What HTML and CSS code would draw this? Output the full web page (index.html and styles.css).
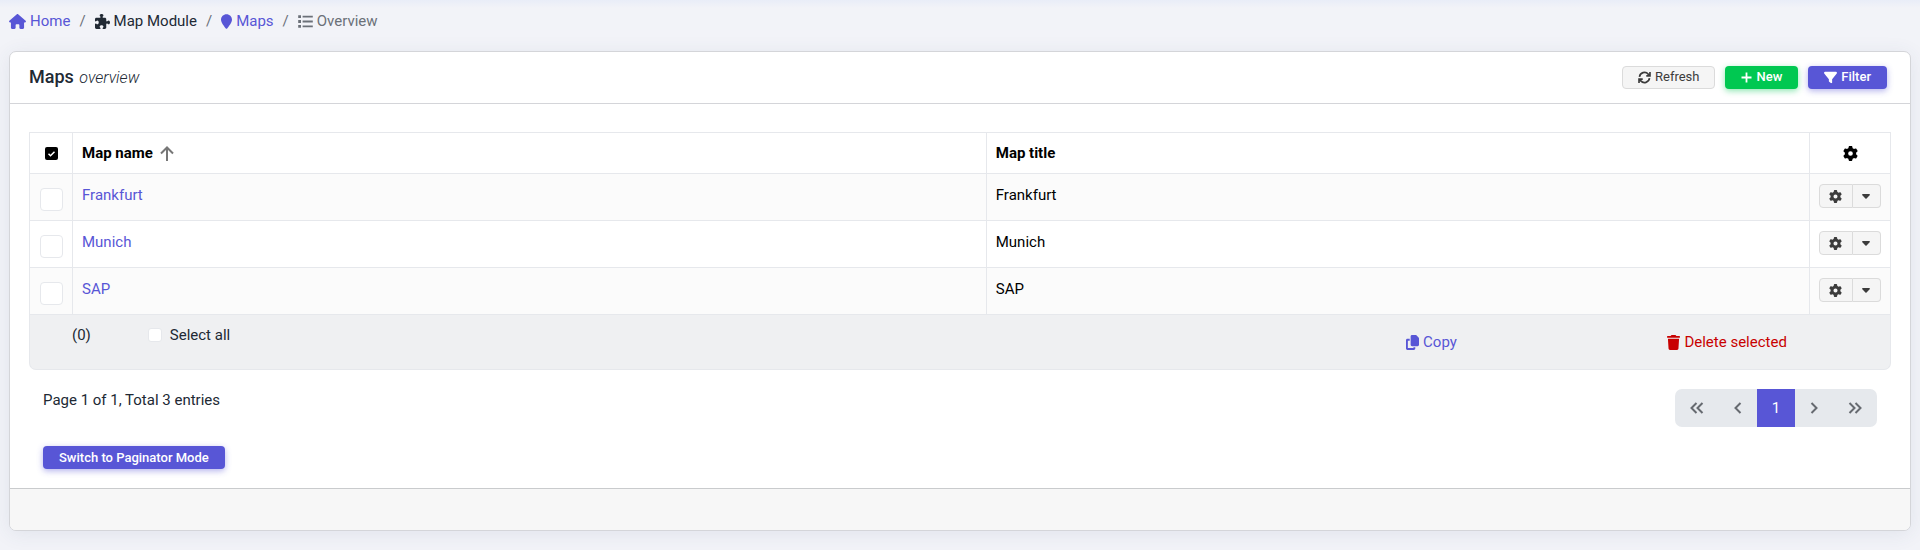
FILE: index.html
```html
<!DOCTYPE html>
<html lang="en">
<head>
<meta charset="utf-8">
<title>Maps overview</title>
<link rel="stylesheet" href="styles.css">
</head>
<body>
<svg class="sprite" aria-hidden="true">
  <symbol id="gear" viewBox="0 0 512 512"><path d="M495.900 166.600c3.200 8.700 .5 18.400-6.400 24.600l-43.300 39.400c1.100 8.300 1.700 16.800 1.700 25.400s-.6 17.100-1.700 25.400l43.300 39.400c6.900 6.200 9.600 15.900 6.400 24.600c-4.400 11.900-9.700 23.300-15.800 34.300l-4.700 8.100c-6.600 11-14 21.400-22.100 31.200c-5.900 7.200-15.700 9.600-24.500 6.800l-55.700-17.700c-13.400 10.300-28.200 18.900-44 25.400l-12.500 57.100c-2 9.100-9 16.300-18.200 17.800c-13.800 2.300-28 3.500-42.500 3.500s-28.700-1.200-42.500-3.500c-9.200-1.500-16.200-8.700-18.200-17.800l-12.500-57.100c-15.800-6.500-30.600-15.100-44-25.400L83.100 425.900c-8.800 2.800-18.600 .3-24.500-6.800c-8.100-9.800-15.500-20.200-22.100-31.200l-4.700-8.100c-6.100-11-11.400-22.400-15.800-34.300c-3.200-8.700-.5-18.400 6.400-24.600l43.300-39.400C64.600 273.100 64 264.600 64 256s.6-17.100 1.700-25.400L22.400 191.200c-6.900-6.200-9.600-15.900-6.400-24.600c4.400-11.900 9.700-23.300 15.800-34.300l4.700-8.100c6.600-11 14-21.400 22.100-31.200c5.900-7.200 15.700-9.600 24.500-6.800l55.700 17.700c13.400-10.300 28.200-18.900 44-25.400l12.500-57.100c2-9.100 9-16.300 18.200-17.800C227.300 1.200 241.500 0 256 0s28.700 1.200 42.500 3.500c9.200 1.500 16.200 8.700 18.200 17.800l12.500 57.100c15.800 6.500 30.600 15.100 44 25.400l55.700-17.700c8.800-2.800 18.600-.3 24.500 6.800c8.100 9.800 15.500 20.200 22.100 31.200l4.700 8.100c6.100 11 11.400 22.400 15.800 34.300zM256 336a80 80 0 1 0 0-160 80 80 0 1 0 0 160z"/></symbol>
  <symbol id="caret" viewBox="0 0 10 6"><path d="M1 0h8c.8 0 1.200 .9 .6 1.500L5.700 5.500c-.4 .4-1 .4-1.400 0L.4 1.500C-.2 .9 .2 0 1 0z"/></symbol>
</svg>

<nav aria-label="Breadcrumb">
  <ol class="breadcrumb">
    <li><a href="#home"><svg class="icon icon-wide" viewBox="0 0 576 512"><path d="M575.800 255.500c0 18-15 32.100-32 32.100h-32l.7 160.200c0 2.700-.2 5.400-.5 8.100V472c0 22.100-17.900 40-40 40H392c-22.100 0-40-17.900-40-40V384c0-17.700-14.300-32-32-32H256c-17.700 0-32 14.300-32 32v88c0 22.100-17.900 40-40 40H104c-22.100 0-40-17.900-40-40V287.600H32c-18 0-32-14-32-32.100c0-9 3-17 10-24L266.400 8c7-7 15-8 22-8s15 2 21 7L564.800 231.500c8 7 12 15 11 24z"/></svg>Home</a></li>
    <li><span class="crumb"><svg class="icon icon-square" viewBox="0 0 512 512"><path d="M192 104.800c0-9.200-5.800-17.300-13.200-22.800C167.200 73.300 160 61.300 160 48c0-26.500 28.700-48 64-48s64 21.500 64 48c0 13.300-7.200 25.300-18.800 34c-7.400 5.500-13.200 13.600-13.200 22.800c0 12.800 10.400 23.200 23.200 23.200H336c26.500 0 48 21.500 48 48v56.800c0 12.800 10.400 23.200 23.200 23.200c9.200 0 17.300-5.800 22.800-13.200c8.700-11.600 20.700-18.800 34-18.800c26.500 0 48 28.700 48 64s-21.500 64-48 64c-13.300 0-25.300-7.200-34-18.800c-5.500-7.400-13.600-13.200-22.800-13.200c-12.800 0-23.200 10.400-23.200 23.200V464c0 26.500-21.500 48-48 48H279.200c-12.800 0-23.200-10.400-23.200-23.200c0-9.200 5.800-17.300 13.200-22.800c11.600-8.700 18.800-20.700 18.800-34c0-26.500-28.700-48-64-48s-64 21.500-64 48c0 13.300 7.200 25.300 18.800 34c7.400 5.500 13.200 13.600 13.200 22.800c0 12.800-10.400 23.200-23.200 23.200H48c-26.500 0-48-21.500-48-48V343.200C0 330.400 10.400 320 23.200 320c9.200 0 17.300 5.800 22.800 13.200C54.700 344.800 66.700 352 80 352c26.500 0 48-28.700 48-64s-21.500-64-48-64c-13.300 0-25.300 7.200-34 18.800C40.500 250.200 32.400 256 23.200 256C10.400 256 0 245.600 0 232.800V176c0-26.500 21.500-48 48-48H168.800c12.800 0 23.200-10.400 23.200-23.200z"/></svg>Map Module</span></li>
    <li><a href="#maps"><svg class="icon icon-pin" viewBox="0 0 384 512"><path d="M215.700 499.200C267 435 384 279.400 384 192C384 86 298 0 192 0S0 86 0 192c0 87.400 117 243 168.300 307.200c12.300 15.300 35.100 15.300 47.400 0z"/></svg>Maps</a></li>
    <li><span class="crumb crumb-current" aria-current="page"><svg class="icon icon-square" viewBox="0 0 15 15"><path d="M.2 1.200h2.800v2.800H.2zM.2 6.100h2.800v2.800H.2zM.2 11h2.800v2.800H.2zM4.600 1.700h10.200v1.800H4.600zM4.600 6.600h10.200v1.800H4.600zM4.600 11.500h10.200v1.800H4.600z"/></svg>Overview</span></li>
  </ol>
</nav>

<main class="card">
  <header class="card-header">
    <h1 class="title">Maps <em class="subtitle">overview</em></h1>
    <div class="actions">
      <button type="button" class="btn btn-light"><svg class="icon icon-refresh" viewBox="0 0 14 14"><path class="stroke" d="M1.600 6.200A5.400 5.400 0 0 1 11 3.400l1.600 1.600M12.400 7.800A5.400 5.400 0 0 1 3 10.600L1.400 9M12.900 1.200v4H8.900M1.100 12.800v-4h4"/></svg>Refresh</button>
      <button type="button" class="btn btn-green"><svg class="icon icon-plus" viewBox="0 0 11 11"><path class="stroke" d="M5.500 .5v10M.5 5.500h10"/></svg>New</button>
      <button type="button" class="btn btn-primary"><svg class="icon icon-filter" viewBox="0 0 512 512"><path d="M3.900 54.900C10.500 40.900 24.500 32 40 32H472c15.500 0 29.500 8.900 36.100 22.900s4.600 30.500-5.200 42.500L320 320.900V448c0 12.100-6.800 23.200-17.700 28.600s-23.800 4.300-33.500-3l-64-48c-8.100-6-12.800-15.500-12.800-25.600V320.900L9 97.300C-.7 85.400-2.800 68.800 3.900 54.900z"/></svg>Filter</button>
    </div>
  </header>

  <div class="card-body">
    <table class="grid">
      <colgroup><col class="col-check"><col class="col-name"><col><col class="col-tools"></colgroup>
      <thead>
        <tr>
          <th class="center" scope="col"><svg class="check-icon" viewBox="0 0 13 13" role="img" aria-label="Selection"><rect width="13" height="13" rx="2"/><path d="M3.500 6.700l2 2 4-4"/></svg></th>
          <th scope="col"><a class="sort" href="#sort">Map name<svg class="sort-icon" viewBox="0 0 14 15" aria-hidden="true"><path d="M7 15V1.500M1 7.500l6-6 6 6"/></svg></a></th>
          <th scope="col">Map title</th>
          <th class="center" scope="col"><svg class="gear-head" role="img" aria-label="Actions"><use href="#gear"/></svg></th>
        </tr>
      </thead>
      <tbody>
        <tr>
          <td class="center"><input class="row-check" type="checkbox" aria-label="Select Frankfurt"></td>
          <td><a href="#frankfurt">Frankfurt</a></td>
          <td>Frankfurt</td>
          <td><div class="tools"><button type="button" class="tool" aria-label="Edit Frankfurt"><svg class="gear"><use href="#gear"/></svg></button><button type="button" class="tool tool-menu" aria-label="More for Frankfurt"><svg class="caret"><use href="#caret"/></svg></button></div></td>
        </tr>
        <tr>
          <td class="center"><input class="row-check" type="checkbox" aria-label="Select Munich"></td>
          <td><a href="#munich">Munich</a></td>
          <td>Munich</td>
          <td><div class="tools"><button type="button" class="tool" aria-label="Edit Munich"><svg class="gear"><use href="#gear"/></svg></button><button type="button" class="tool tool-menu" aria-label="More for Munich"><svg class="caret"><use href="#caret"/></svg></button></div></td>
        </tr>
        <tr>
          <td class="center"><input class="row-check" type="checkbox" aria-label="Select SAP"></td>
          <td><a href="#sap">SAP</a></td>
          <td>SAP</td>
          <td><div class="tools"><button type="button" class="tool" aria-label="Edit SAP"><svg class="gear"><use href="#gear"/></svg></button><button type="button" class="tool tool-menu" aria-label="More for SAP"><svg class="caret"><use href="#caret"/></svg></button></div></td>
        </tr>
      </tbody>
    </table>

    <div class="bulk">
      <div class="bulk-select">
        <span class="count">(0)</span>
        <label class="select-all"><input class="all-check" type="checkbox">Select all</label>
      </div>
      <a class="bulk-action" href="#copy"><svg class="icon icon-copy" viewBox="0 0 448 512"><path d="M208 0H332.100c12.700 0 24.900 5.100 33.900 14.100l67.900 67.900c9 9 14.100 21.200 14.100 33.900V336c0 26.500-21.500 48-48 48H208c-26.500 0-48-21.500-48-48V48c0-26.500 21.500-48 48-48zM48 128h80v64H64V448H256V416h64v48c0 26.500-21.500 48-48 48H48c-26.500 0-48-21.500-48-48V176c0-26.500 21.500-48 48-48z"/></svg>Copy</a>
      <a class="bulk-action danger" href="#delete"><svg class="icon icon-copy" viewBox="0 0 448 512"><path d="M135.200 17.700L128 32H32C14.300 32 0 46.300 0 64S14.300 96 32 96H416c17.700 0 32-14.300 32-32s-14.300-32-32-32H320l-7.200-14.300C307.400 6.800 296.300 0 284.200 0H163.800c-12.100 0-23.200 6.800-28.600 17.700zM416 128H32L53.200 467c1.600 25.300 22.600 45 47.900 45H346.900c25.300 0 46.300-19.700 47.900-45L416 128z"/></svg>Delete selected</a>
    </div>

    <div class="paging">
      <div class="paging-info">
        <p class="summary">Page 1 of 1, Total 3 entries</p>
        <button type="button" class="btn btn-primary">Switch to Paginator Mode</button>
      </div>
      <nav class="pager" aria-label="Pages">
        <a class="page page-end" href="#first" aria-label="First page"><svg class="chevron chevron-double" viewBox="0 0 14 12"><path d="M6.500 1L1.500 6l5 5M12.500 1l-5 5 5 5"/></svg></a>
        <a class="page" href="#prev" aria-label="Previous page"><svg class="chevron" viewBox="0 0 8 12"><path d="M6.500 1L1.500 6l5 5"/></svg></a>
        <a class="page page-current" href="#1" aria-current="page">1</a>
        <a class="page" href="#next" aria-label="Next page"><svg class="chevron" viewBox="0 0 8 12"><path d="M1.500 1l5 5-5 5"/></svg></a>
        <a class="page page-end" href="#last" aria-label="Last page"><svg class="chevron chevron-double" viewBox="0 0 14 12"><path d="M1.500 1l5 5-5 5M7.500 1l5 5-5 5"/></svg></a>
      </nav>
    </div>
  </div>
  <footer class="card-footer"></footer>
</main>
</body>
</html>
```

FILE: styles.css
```css
* { box-sizing: border-box; }

body {
  margin: 0;
  min-height: 100vh;
  padding: 10px 9px 18px;
  background: linear-gradient(#e9edf8, #f2f3f8 8px);
  color: #212934;
  font: 15px/22px Roboto, sans-serif;
}

a { color: #5856d6; text-decoration: none; }
svg { display: block; flex: none; fill: currentColor; }
button { font: inherit; cursor: pointer; }

.sprite { position: absolute; width: 0; height: 0; }
.stroke { fill: none; stroke: currentColor; stroke-width: 1.8; }

.breadcrumb {
  display: flex;
  margin: 0 0 19px;
  padding: 0;
  list-style: none;
}
.breadcrumb li { display: flex; }
.breadcrumb li + li::before {
  content: "/";
  padding: 0 9px;
  color: #6b7078;
}
.breadcrumb a, .crumb { display: flex; align-items: center; gap: 4px; }
.crumb-current { color: #6b7078; }
.icon { height: 15px; }
.icon-wide { width: 17px; }
.icon-square { width: 15px; }
.icon-pin { width: 11px; }
.icon-copy { width: 13px; }

.card {
  border: 1px solid #d4d5d9;
  border-radius: 7px;
  background: #fff;
  box-shadow: 0 3px 20px rgba(60, 75, 110, .09);
  overflow: hidden;
}
.card-header {
  display: flex;
  align-items: center;
  justify-content: space-between;
  padding: 13px 23px 14px 19px;
  border-bottom: 1px solid #d4d5d9;
}
.title { margin: 0; font-size: 18px; line-height: 23px; font-weight: 500; }
.subtitle { margin-left: 1px; font-size: 16px; font-weight: 300; }
.actions { display: flex; gap: 10px; }

.btn {
  display: flex;
  align-items: center;
  gap: 4px;
  height: 23px;
  padding: 0 15px;
  border: 1px solid transparent;
  border-radius: 4px;
  color: #fff;
  font-size: 13px;
  font-weight: 500;
}
.btn-light {
  border-color: #dbdbdb;
  background: #f5f5f5;
  color: #3c3c3c;
  font-weight: 400;
}
.btn-green { background: #00c851; box-shadow: 0 2px 6px rgba(0, 200, 81, .45); }
.btn-primary { background: #5856d6; box-shadow: 0 2px 6px rgba(88, 86, 214, .45); }
.icon-refresh { width: 13px; height: 13px; }
.icon-plus { width: 11px; height: 11px; }
.icon-filter { width: 13px; height: 13px; }

.card-body { padding: 28px 19px 19px; }

.grid {
  width: 100%;
  table-layout: fixed;
  border-collapse: collapse;
  color: #000;
}
.col-check { width: 43px; }
.col-name { width: 49.1%; }
.col-tools { width: 81px; }
.grid th, .grid td {
  padding: 10px 9px;
  border: 1px solid #e6e8ec;
  text-align: left;
  vertical-align: top;
}
.grid th { padding: 9px; font-weight: 700; }
.grid td { height: 47px; }
.grid tbody tr:nth-child(odd) { background: #fbfbfb; }
.grid .center { padding-top: 9px; padding-bottom: 9px; text-align: center; vertical-align: middle; }
.check-icon, .gear-head { margin: 0 auto; }
.check-icon { width: 13px; height: 13px; }
.check-icon path { fill: none; stroke: #fff; stroke-width: 1.5; }
.gear-head { width: 15px; height: 15px; }
.sort { display: flex; align-items: center; gap: 7px; color: inherit; }
.sort-icon { width: 14px; height: 15px; }
.sort-icon path { fill: none; stroke: #777; stroke-width: 2; }

.row-check, .all-check {
  appearance: none;
  display: block;
  margin: 0;
  border: 1px solid #e6e8ec;
  background: #fff;
}
.row-check { width: 23px; height: 23px; margin: 4px auto 0; border-radius: 4px; }
.all-check { width: 14px; height: 14px; border-radius: 3px; }

.tools { display: flex; }
.tool {
  display: flex;
  flex: 1 1 33px;
  align-items: center;
  justify-content: center;
  height: 24px;
  padding: 0;
  border: 1px solid #dbdbdb;
  border-radius: 4px 0 0 4px;
  background: #f5f5f5;
  color: #3c3c3c;
}
.tool-menu { flex-basis: 28px; border-left: 0; border-radius: 0 4px 4px 0; }
.gear { width: 13px; height: 13px; }
.caret { width: 8px; height: 5px; }

.bulk {
  display: grid;
  grid-template-columns: 1fr 16.4% 16.4%;
  align-items: start;
  padding: 9px 15px 16px 42px;
  border: 1px solid #e6e8ec;
  border-top: 0;
  border-radius: 0 0 7px 7px;
  background: #eff0f2;
}
.bulk-select { display: flex; gap: 57px; }
.select-all { display: flex; align-items: center; gap: 8px; }
.bulk-action {
  display: flex;
  align-items: center;
  justify-content: center;
  gap: 4px;
  padding-top: 7px;
}
.danger { color: #c80000; }

.paging {
  display: flex;
  align-items: flex-start;
  justify-content: space-between;
  padding: 19px 14px 0;
}
.summary { margin: 0 0 35px; }

.pager {
  display: flex;
  border-radius: 7px;
  background: #e6e9ed;
  overflow: hidden;
}
.page {
  display: flex;
  align-items: center;
  justify-content: center;
  width: 38px;
  height: 38px;
  color: #666a70;
}
.page-end { width: 44px; }
.page-current { background: #5856d6; color: #fff; }
.chevron { width: 8px; height: 12px; fill: none; stroke: currentColor; stroke-width: 2; }
.chevron-double { width: 14px; }

.card-footer { height: 42px; border-top: 1px solid #c9cbcd; background: #f7f7f7; }
```
